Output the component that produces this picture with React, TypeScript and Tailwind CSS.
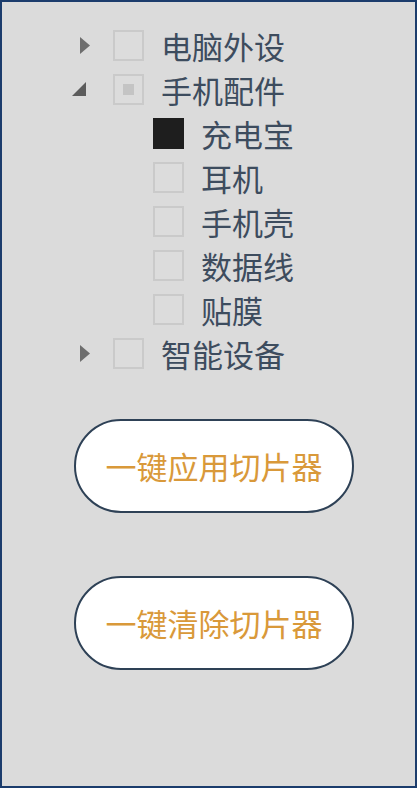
import React from "react";

type Node = {
	label: string;
	state: "none" | "checked" | "partial";
	expanded?: boolean;
	children?: Node[];
};

const tree: Node[] = [
	{ label: "电脑外设", state: "none", expanded: false, children: [] },
	{
		label: "手机配件",
		state: "partial",
		expanded: true,
		children: [
			{ label: "充电宝", state: "checked" },
			{ label: "耳机", state: "none" },
			{ label: "手机壳", state: "none" },
			{ label: "数据线", state: "none" },
			{ label: "贴膜", state: "none" },
		],
	},
	{ label: "智能设备", state: "none", expanded: false, children: [] },
];

const CheckBox = ({ state }: { state: Node["state"] }) => {
	if (state === "checked") {
		return <div className="w-[31px] h-[31px] bg-[#1e1e1e] shrink-0" />;
	}
	return (
		<div className="w-[31px] h-[31px] border-2 border-[#cacaca] bg-[#dcdcdc] shrink-0 flex items-center justify-center">
			{state === "partial" && <div className="w-[11px] h-[11px] bg-[#c4c4c4]" />}
		</div>
	);
};

const Arrow = ({ expanded }: { expanded?: boolean }) => (
	<div className="w-[41px] h-full shrink-0 relative">
		{expanded ? (
			<svg className="absolute left-0 top-[15px]" width="15" height="15" viewBox="0 0 15 15">
				<polygon points="14,0 14,14 0,14" fill="#5c5c5c" />
			</svg>
		) : (
			<svg className="absolute left-[8px] top-[14px]" width="11" height="17" viewBox="0 0 11 17">
				<polygon points="0,0 10,8.5 0,17" fill="#6e6e6e" />
			</svg>
		)}
	</div>
);

const Row = ({ node, level }: { node: Node; level: number }) => (
	<div className={`flex items-center h-[44px] ${level === 1 ? "pl-[81px]" : ""}`}>
		{level === 0 && <Arrow expanded={node.expanded} />}
		<CheckBox state={node.state} />
		<span className="ml-[17px] text-[31px] leading-none text-[#3d4c5e]">{node.label}</span>
	</div>
);

export default function App() {
	return (
		<div
			className="w-[417px] h-[788px] border-2 border-[#1b3c6c] bg-[#dbdbdb] overflow-hidden"
			style={{ fontFamily: '"Noto Sans CJK SC", "Noto Sans", sans-serif' }}
		>
			<div className="pl-[70px] pt-[21px]">
				{tree.map((node) => (
					<div key={node.label}>
						<Row node={node} level={0} />
						{node.expanded &&
							node.children?.map((c) => <Row key={c.label} node={c} level={1} />)}
					</div>
				))}
			</div>
			<div className="flex flex-col pl-[72px] mt-[44px] gap-[63px]">
				{["一键应用切片器", "一键清除切片器"].map((t) => (
					<button
						key={t}
						className="w-[280px] h-[94px] rounded-full border-2 border-[#2e4156] bg-white text-[31px] text-[#d9993a] flex items-center justify-center"
					>
						{t}
					</button>
				))}
			</div>
		</div>
	);
}
